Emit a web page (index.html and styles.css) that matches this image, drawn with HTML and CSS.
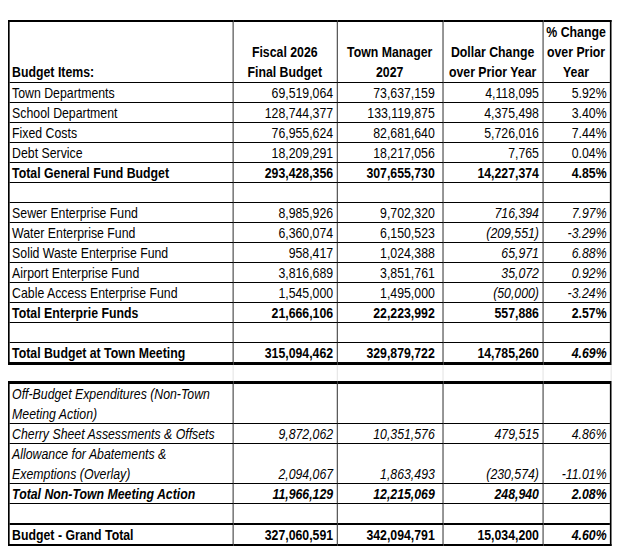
FILE: index.html
```html
<!DOCTYPE html>
<html>
<head>
<meta charset="utf-8">
<link rel="stylesheet" href="styles.css">
</head>
<body>
<div class="sheet">
<table class="budget">
  <colgroup>
    <col class="c-label"><col class="c-fy26"><col class="c-tm"><col class="c-dol"><col class="c-pct">
  </colgroup>
  <tr class="head">
    <td class="lbl">Budget Items:</td>
    <td>Fiscal 2026<br>Final Budget</td>
    <td>Town Manager<br>2027</td>
    <td>Dollar Change<br>over Prior Year</td>
    <td>% Change<br>over Prior<br>Year</td>
  </tr>
  <tr><td class="lbl">Town Departments</td><td>69,519,064</td><td class="tm">73,637,159</td><td>4,118,095</td><td>5.92%</td></tr>
  <tr><td class="lbl">School Department</td><td>128,744,377</td><td class="tm">133,119,875</td><td>4,375,498</td><td>3.40%</td></tr>
  <tr><td class="lbl">Fixed Costs</td><td>76,955,624</td><td class="tm">82,681,640</td><td>5,726,016</td><td>7.44%</td></tr>
  <tr><td class="lbl">Debt Service</td><td>18,209,291</td><td class="tm">18,217,056</td><td>7,765</td><td>0.04%</td></tr>
  <tr class="b"><td class="lbl">Total General Fund Budget</td><td>293,428,356</td><td class="tm">307,655,730</td><td>14,227,374</td><td>4.85%</td></tr>
  <tr class="empty"><td class="lbl"></td><td></td><td></td><td></td><td></td></tr>
  <tr><td class="lbl">Sewer Enterprise Fund</td><td>8,985,926</td><td class="tm">9,702,320</td><td class="i">716,394</td><td class="i">7.97%</td></tr>
  <tr><td class="lbl">Water Enterprise Fund</td><td>6,360,074</td><td class="tm">6,150,523</td><td class="i">(209,551)</td><td class="i">-3.29%</td></tr>
  <tr><td class="lbl">Solid Waste Enterprise Fund</td><td>958,417</td><td class="tm">1,024,388</td><td class="i">65,971</td><td class="i">6.88%</td></tr>
  <tr><td class="lbl">Airport Enterprise Fund</td><td>3,816,689</td><td class="tm">3,851,761</td><td class="i">35,072</td><td class="i">0.92%</td></tr>
  <tr><td class="lbl">Cable Access Enterprise Fund</td><td>1,545,000</td><td class="tm">1,495,000</td><td class="i">(50,000)</td><td class="i">-3.24%</td></tr>
  <tr class="b"><td class="lbl">Total Enterprie Funds</td><td>21,666,106</td><td class="tm">22,223,992</td><td>557,886</td><td>2.57%</td></tr>
  <tr class="empty"><td class="lbl"></td><td></td><td></td><td></td><td></td></tr>
  <tr class="b total-tm"><td class="lbl">Total Budget at Town Meeting</td><td>315,094,462</td><td class="tm">329,879,722</td><td>14,785,260</td><td class="i">4.69%</td></tr>
  <tr class="gap"><td class="lbl"></td><td></td><td></td><td></td><td></td></tr>
  <tr class="i tall first2"><td class="lbl">Off-Budget Expenditures (Non-Town<br>Meeting Action)</td><td></td><td></td><td></td><td></td></tr>
  <tr class="i"><td class="lbl">Cherry Sheet Assessments &amp; Offsets</td><td>9,872,062</td><td class="tm">10,351,576</td><td>479,515</td><td>4.86%</td></tr>
  <tr class="i tall"><td class="lbl">Allowance for Abatements &amp;<br>Exemptions (Overlay)</td><td>2,094,067</td><td class="tm">1,863,493</td><td>(230,574)</td><td>-11.01%</td></tr>
  <tr class="i b"><td class="lbl">Total Non-Town Meeting Action</td><td>11,966,129</td><td class="tm">12,215,069</td><td>248,940</td><td>2.08%</td></tr>
  <tr class="empty"><td class="lbl"></td><td></td><td></td><td></td><td></td></tr>
  <tr class="b grand"><td class="lbl">Budget - Grand Total</td><td>327,060,591</td><td class="tm">342,094,791</td><td>15,034,200</td><td class="i">4.60%</td></tr>
</table>
</div>
</body>
</html>
```

FILE: styles.css
```css
html, body {
  margin: 0;
  padding: 0;
  background: #ffffff;
  overflow: hidden;
}
body {
  padding: 20px 0 0 8px;
  font-family: "Liberation Sans", Arial, sans-serif;
  font-size: 15px;
  color: #000;
}
.sheet {
  width: 604px;
  overflow: hidden;
}
/* Arial Narrow is Arial at ~82% width: lay the table out wide, then compress it horizontally */
.budget {
  border-collapse: collapse;
  table-layout: fixed;
  width: 734px;
  transform: scaleX(0.82);
  transform-origin: 0 0;
}
.c-label { width: 273px; }
.c-fy26 { width: 127px; }
.c-tm { width: 129px; }
.c-dol { width: 122px; }
.c-pct { width: 83px; }

.budget td {
  border: 1px solid #000;
  padding: 0 4px 0 2px;
  height: 19px;
  line-height: 19px;
  text-align: right;
  vertical-align: bottom;
  white-space: nowrap;
  overflow: hidden;
}
.budget td.tm { padding-right: 9px; }
.budget td.lbl { text-align: left; border-left-width: 2px; padding-left: 3px; }
.budget td:last-child { border-right-width: 2px; }

.head td {
  font-weight: bold;
  text-align: center;
  height: 58px;
  line-height: 20px;
  border-top-width: 2px;
  padding: 0 1px 0;
}
.budget .head td.lbl { text-align: left; padding-left: 3px; }
.head td:last-child { padding-right: 2px; }

.b td { font-weight: bold; }
.i td, td.i { font-style: italic; }

.total-tm td { border-bottom: 3px solid #000; }
.gap td {
  border-top: 3px solid #000;
  border-bottom: 3px solid #000;
  border-left: 1px solid #dcdcdc;
  border-right: 1px solid #dcdcdc;
  height: 16px;
}
.budget .gap td.lbl { border-left: none; }
.budget .gap td:last-child { border-right: 1px solid #dcdcdc; }
.budget .tall td { height: 37px; line-height: 19.5px; }
.grand td { border-top: 2px solid #000; border-bottom: 2px solid #000; }
```
